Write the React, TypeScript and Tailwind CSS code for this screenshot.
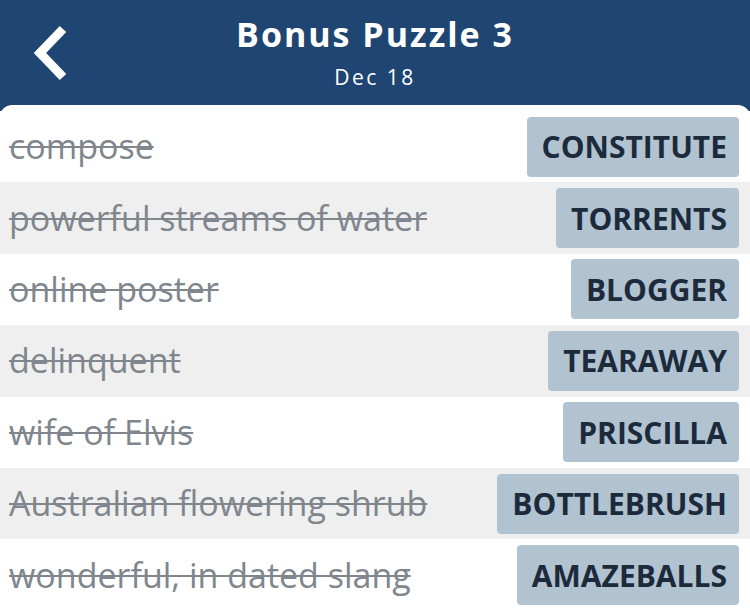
const rows = [
  { clue: "compose", answer: "CONSTITUTE" },
  { clue: "powerful streams of water", answer: "TORRENTS" },
  { clue: "online poster", answer: "BLOGGER" },
  { clue: "delinquent", answer: "TEARAWAY" },
  { clue: "wife of Elvis", answer: "PRISCILLA" },
  { clue: "Australian flowering shrub", answer: "BOTTLEBRUSH" },
  { clue: "wonderful, in dated slang", answer: "AMAZEBALLS" },
];

export default function App() {
  return (
    <div className="w-[750px] h-[610px] overflow-hidden bg-[#1f4572] font-['Open_Sans',sans-serif]">
      <header className="relative h-[105px] flex flex-col items-center text-white">
        <button type="button" className="absolute left-[30px] top-[25px]">
          <svg width="40" height="56" viewBox="0 0 40 56">
            <path d="M33 4 L10 28 L33 52" fill="none" stroke="white" strokeWidth="9" strokeLinecap="butt" strokeLinejoin="miter" />
          </svg>
        </button>
        <h1 className="mt-[11px] text-[34px] leading-[46px] font-bold tracking-[2px]">Bonus Puzzle 3</h1>
        <p className="mt-[6px] text-[21px] leading-[28px] tracking-[2.5px]">Dec 18</p>
      </header>
      <main className="bg-white rounded-t-[12px] pt-[6px]">
        {rows.map(({ clue, answer }, i) => (
          <div
            key={answer}
            className={`h-[71.4px] flex items-center justify-between pl-[9px] pr-[11px] ${
              i % 2 === 1 ? "bg-[#efefef]" : "bg-white"
            }`}
          >
            <span className="text-[34px] text-[#80868d] line-through decoration-[2px]">{clue}</span>
            <span className="h-[60px] flex items-center pl-[15px] pr-[12px] rounded-[4px] bg-[#b1c2d1] text-[30px] font-bold text-[#1c2a3b]">
              {answer}
            </span>
          </div>
        ))}
      </main>
    </div>
  );
}
